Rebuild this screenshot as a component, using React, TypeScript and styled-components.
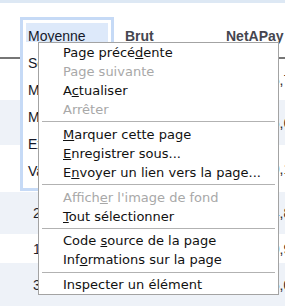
import React from 'react';
import styled, { createGlobalStyle } from 'styled-components';

const GlobalStyle = createGlobalStyle`
  html, body { margin: 0; padding: 0; background: #ffffff; }
  body { overflow: hidden; }
`;

const Page = styled.div`
  position: relative;
  width: 285px;
  height: 306px;
  overflow: hidden;
  background: #ffffff;
  font-family: "Liberation Sans", Arial, sans-serif;
  font-size: 14px;
  line-height: 16px;
`;

const TopStrip = styled.div`
  height: 3px;
  background: #dde8f4;
`;

const Table = styled.div`
  display: flex;
  flex-direction: column;
  width: 316px;
`;

const HeaderRow = styled.div`
  display: grid;
  grid-template-columns: 20px 94px 112px 90px;
  height: 56px;
  box-sizing: border-box;
  padding-top: 25px;
  border-bottom: 2px solid #767676;
`;

const HeadCell = styled.div<{ $pad?: number }>`
  padding-left: ${(p) => p.$pad ?? 0}px;
  font-weight: bold;
  color: #45464f;
  white-space: nowrap;
`;

const BodyRow = styled.div<{ $h: number; $alt: boolean }>`
  display: grid;
  grid-template-columns: 20px 94px 112px 90px;
  align-items: center;
  height: ${(p) => p.$h}px;
  background: ${(p) => (p.$alt ? '#eef2f8' : '#ffffff')};
  color: #1e1e28;
`;

const FirstCell = styled.div`
  padding-left: 13px;
  white-space: nowrap;
`;

const MidCell = styled.div`
  padding-left: 11px;
  white-space: nowrap;
`;

const NumCell = styled.div`
  text-align: right;
  padding-right: 17px;
  white-space: nowrap;
`;

const Ghost = styled.div`
  position: absolute;
  left: 20px;
  top: 17px;
  width: 94px;
  box-sizing: border-box;
  border: 3px solid #c6daf6;
  padding: 3px;
  background: #ffffff;
  color: #16192a;
`;

const GhostHead = styled.div`
  height: 19px;
  box-sizing: border-box;
  padding: 5px 0 0 2px;
  margin-bottom: 8px;
  background: #dde9fa;
  white-space: nowrap;
`;

const GhostCell = styled.div`
  height: 27px;
  box-sizing: border-box;
  padding: 5px 0 0 2px;
  white-space: nowrap;
  overflow: hidden;
`;

const Menu = styled.div`
  position: absolute;
  left: 38px;
  top: 42px;
  width: 241px;
  box-sizing: border-box;
  border: 1px solid #a3a3a3;
  background: #ffffff;
  padding: 0;
  font-family: "DejaVu Sans", "Noto Sans", sans-serif;
  font-size: 13px;
`;

const Item = styled.div<{ $disabled?: boolean }>`
  height: 19px;
  line-height: 19px;
  padding-left: 24px;
  color: ${(p) => (p.$disabled ? '#a8a8a8' : '#111111')};
  white-space: nowrap;
  u {
    text-decoration: underline;
  }
`;

const Separator = styled.div`
  height: 1px;
  margin: 2.375px 3px;
  background: #b2b2b2;
`;

type Entry = { text: string; ul?: number; disabled?: boolean } | 'sep';

const entries: Entry[] = [
  { text: 'Page précédente', ul: 10 },
  { text: 'Page suivante', disabled: true },
  { text: 'Actualiser', ul: 1 },
  { text: 'Arrêter', disabled: true },
  'sep',
  { text: 'Marquer cette page', ul: 0 },
  { text: 'Enregistrer sous...', ul: 0 },
  { text: 'Envoyer un lien vers la page...', ul: 1 },
  'sep',
  { text: "Afficher l'image de fond", ul: 6, disabled: true },
  { text: 'Tout sélectionner', ul: 0 },
  'sep',
  { text: 'Code source de la page', ul: 5 },
  { text: 'Informations sur la page', ul: 3 },
  'sep',
  { text: 'Inspecter un élément' },
];

const Label: React.FC<{ text: string; ul?: number }> = ({ text, ul }) => {
  if (ul === undefined) return <>{text}</>;
  return (
    <>
      {text.slice(0, ul)}
      <u>{text.charAt(ul)}</u>
      {text.slice(ul + 1)}
    </>
  );
};

const rows = [
  { h: 41, alt: false, first: '2 041,5', brut: '2 880,00', net: '2 145,73' },
  { h: 45, alt: true, first: '1 912,2', brut: '2 410,00', net: '1 876,62' },
  { h: 47, alt: false, first: '2 230,8', brut: '3 050,00', net: '2 310,15' },
  { h: 42, alt: true, first: '2 457,8', brut: '2 190,00', net: '1 654,84' },
  { h: 29, alt: false, first: '1 985,3', brut: '2 320,00', net: '1 790,92' },
  { h: 43, alt: true, first: '3 120,4', brut: '2 600,00', net: '2 005,07' },
];

const ghostValues = ['Semaine', 'Mois', 'Mensuel', 'Exercice', 'Variable'];

export default function App() {
  return (
    <>
      <GlobalStyle />
      <Page>
        <TopStrip />
        <Table>
          <HeaderRow>
            <span />
            <HeadCell $pad={8}>Moyenne</HeadCell>
            <HeadCell $pad={11}>Brut</HeadCell>
            <HeadCell>NetAPay</HeadCell>
          </HeaderRow>
          {rows.map((r, i) => (
            <BodyRow key={i} $h={r.h} $alt={r.alt}>
              <span />
              <FirstCell>{r.first}</FirstCell>
              <MidCell>{r.brut}</MidCell>
              <NumCell>{r.net}</NumCell>
            </BodyRow>
          ))}
        </Table>
        <Ghost>
          <GhostHead>Moyenne</GhostHead>
          {ghostValues.map((v) => (
            <GhostCell key={v}>{v}</GhostCell>
          ))}
        </Ghost>
        <Menu>
          {entries.map((e, i) =>
            e === 'sep' ? (
              <Separator key={i} />
            ) : (
              <Item key={i} $disabled={e.disabled}>
                <Label text={e.text} ul={e.ul} />
              </Item>
            )
          )}
        </Menu>
      </Page>
    </>
  );
}
